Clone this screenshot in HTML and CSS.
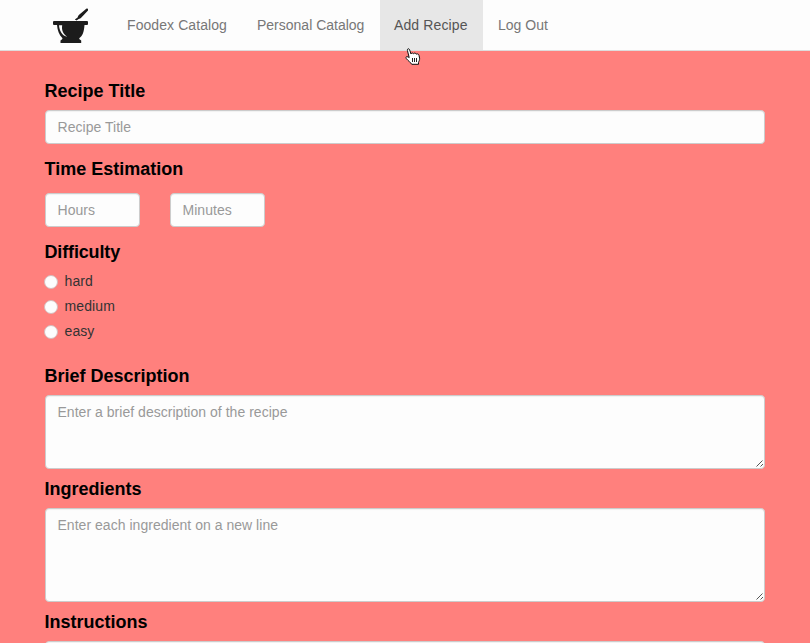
FILE: index.html
```html
<!DOCTYPE html>
<html lang="en">
<head>
<meta charset="utf-8">
<title>Add Recipe</title>
<link rel="stylesheet" href="styles.css">
</head>
<body>
<nav class="navbar">
  <a class="brand" href="#" aria-label="Foodex">
    <svg width="36" height="36" viewBox="0 0 36 36">
      <path fill="#1c1c1c" d="M33.6.6Q34.6 0 35 1V2.4L28.4 9.5Q27.4 10.7 25.6 11L23.6 12.6 21.8 11.6 24.6 9.4Q25 7.6 26.4 6.6ZM1 13H34Q35 13 35 14V16Q35 17 34 17H31.5C31 24 29.5 28 26.2 30.3Q25.8 31 28.2 32.5V35H7.5V32.5Q9.8 31 9.5 30.3C6 27 4.4 22 4 17H1Q0 17 0 16V14Q0 13 1 13Z"/>
      <path fill="#fdfdfd" d="M6 17.2H9.2C8.4 22 10 26 14.4 28.8C9.2 27.8 6.3 22.8 6 17.2Z"/>
    </svg>
  </a>
  <a class="item catalog" href="#">Foodex Catalog</a>
  <a class="item personal" href="#">Personal Catalog</a>
  <a class="item add active" href="#">Add Recipe</a>
  <a class="item" href="#">Log Out</a>
  <svg class="pointer" width="17" height="18" viewBox="0 0 17 18">
    <path fill="#fff" stroke="#111" stroke-linejoin="round" d="M4.2 9.6 2.4 2.4C2 .6 4 .1 4.6 1.7L6 6C6.5 4.6 8.2 4.7 8.5 5.8C9.1 4.7 10.9 4.9 11.2 6.2C12 5.4 13.8 5.9 14 7.4L14.6 10.2C14.8 12.4 13.8 13 13.5 14.5V16.3H6.7C6 14.5 3.6 13.6 1.2 10.4C.2 9 2 7.8 4.2 9.6Z"/>
    <path stroke="#222" d="M7.5 10V14M9.5 10V14M11.5 10V14"/>
  </svg>
</nav>
<form class="recipe">
  <label class="heading" for="title">Recipe Title</label>
  <input class="control" id="title" placeholder="Recipe Title">
  <label class="heading spaced" for="hours">Time Estimation</label>
  <div class="times">
    <input class="control" id="hours" placeholder="Hours">
    <input class="control" placeholder="Minutes">
  </div>
  <div class="heading spaced difficulty">Difficulty</div>
  <div class="choices">
    <label class="choice"><input type="radio" name="difficulty">hard</label>
    <label class="choice"><input type="radio" name="difficulty">medium</label>
    <label class="choice"><input type="radio" name="difficulty">easy</label>
  </div>
  <label class="heading" for="brief">Brief Description</label>
  <div class="area brief">
    <textarea class="control" id="brief" placeholder="Enter a brief description of the recipe"></textarea>
    <svg class="grip" width="8" height="8" viewBox="0 0 8 8"><path d="M.5 7.5l6-6M4.5 7.5l2.5-2.5"/></svg>
  </div>
  <label class="heading" for="ingredients">Ingredients</label>
  <div class="area ingredients">
    <textarea class="control" id="ingredients" placeholder="Enter each ingredient on a new line"></textarea>
    <svg class="grip" width="8" height="8" viewBox="0 0 8 8"><path d="M.5 7.5l6-6M4.5 7.5l2.5-2.5"/></svg>
  </div>
  <label class="heading" for="instructions">Instructions</label>
  <div class="area ingredients">
    <textarea class="control" id="instructions"></textarea>
  </div>
</form>
</body>
</html>
```
FILE: styles.css
```css
* { box-sizing: border-box; }
html { overflow: hidden; }
body {
  margin: 0;
  height: 643px;
  overflow: hidden;
  background: #ff807d;
  color: #333;
  font: 14px/20px "Liberation Sans", Arial, sans-serif;
}
.navbar {
  position: relative;
  display: flex;
  height: 51px;
  padding-left: 53px;
  background: #fdfdfd;
  border-bottom: 1px solid #dedcdc;
}
.brand { width: 59px; padding-top: 8px; }
.brand svg { display: block; }
.item {
  height: 50px;
  padding: 15px;
  color: #777;
  text-decoration: none;
  white-space: nowrap;
}
.catalog { width: 130px; letter-spacing: .08px; }
.personal { width: 138px; }
.add { width: 103px; padding-left: 14px; letter-spacing: .12px; }
.active { background: #e7e7e7; color: #555; }
.pointer { position: absolute; left: 405px; top: 48px; }
.recipe { padding: 27px 45px 0; }
.heading {
  display: block;
  height: 26px;
  margin-bottom: 6px;
  margin-left: -.5px;
  color: #000;
  font-size: 18px;
  font-weight: bold;
  line-height: 26px;
}
.spaced { margin-top: 12px; margin-bottom: 11px; }
.difficulty { margin-bottom: 4px; letter-spacing: -.15px; }
.control {
  display: block;
  width: 100%;
  height: 34px;
  margin: 0;
  padding: 6px 11.5px;
  border: 1px solid #ccc;
  border-radius: 4px;
  background: #fdfdfd;
  color: #555;
  font: inherit;
  letter-spacing: .03px;
  resize: none;
  box-shadow: inset 0 1px 1px rgba(0, 0, 0, .05);
}
.control::placeholder { color: #999; opacity: 1; }
.times { display: grid; grid-template-columns: 95px 95px; gap: 30px; }
.choices { height: 94px; }
.choice {
  display: flex;
  align-items: center;
  gap: 6.5px;
  height: 25px;
  padding-bottom: 1px;
  line-height: 22px;
  letter-spacing: .1px;
}
.choice input {
  appearance: none;
  width: 14px;
  height: 14px;
  margin: 2px 0 0 -1px;
  border: 1px solid #d5bcbc;
  border-radius: 50%;
  background: #fdfdfd;
}
.area { position: relative; margin-bottom: 7px; }
.area .control { height: 100%; }
.brief { height: 74px; }
.ingredients { height: 94px; }
.grip { position: absolute; right: 1px; bottom: 2px; fill: none; stroke: #555; }
```
